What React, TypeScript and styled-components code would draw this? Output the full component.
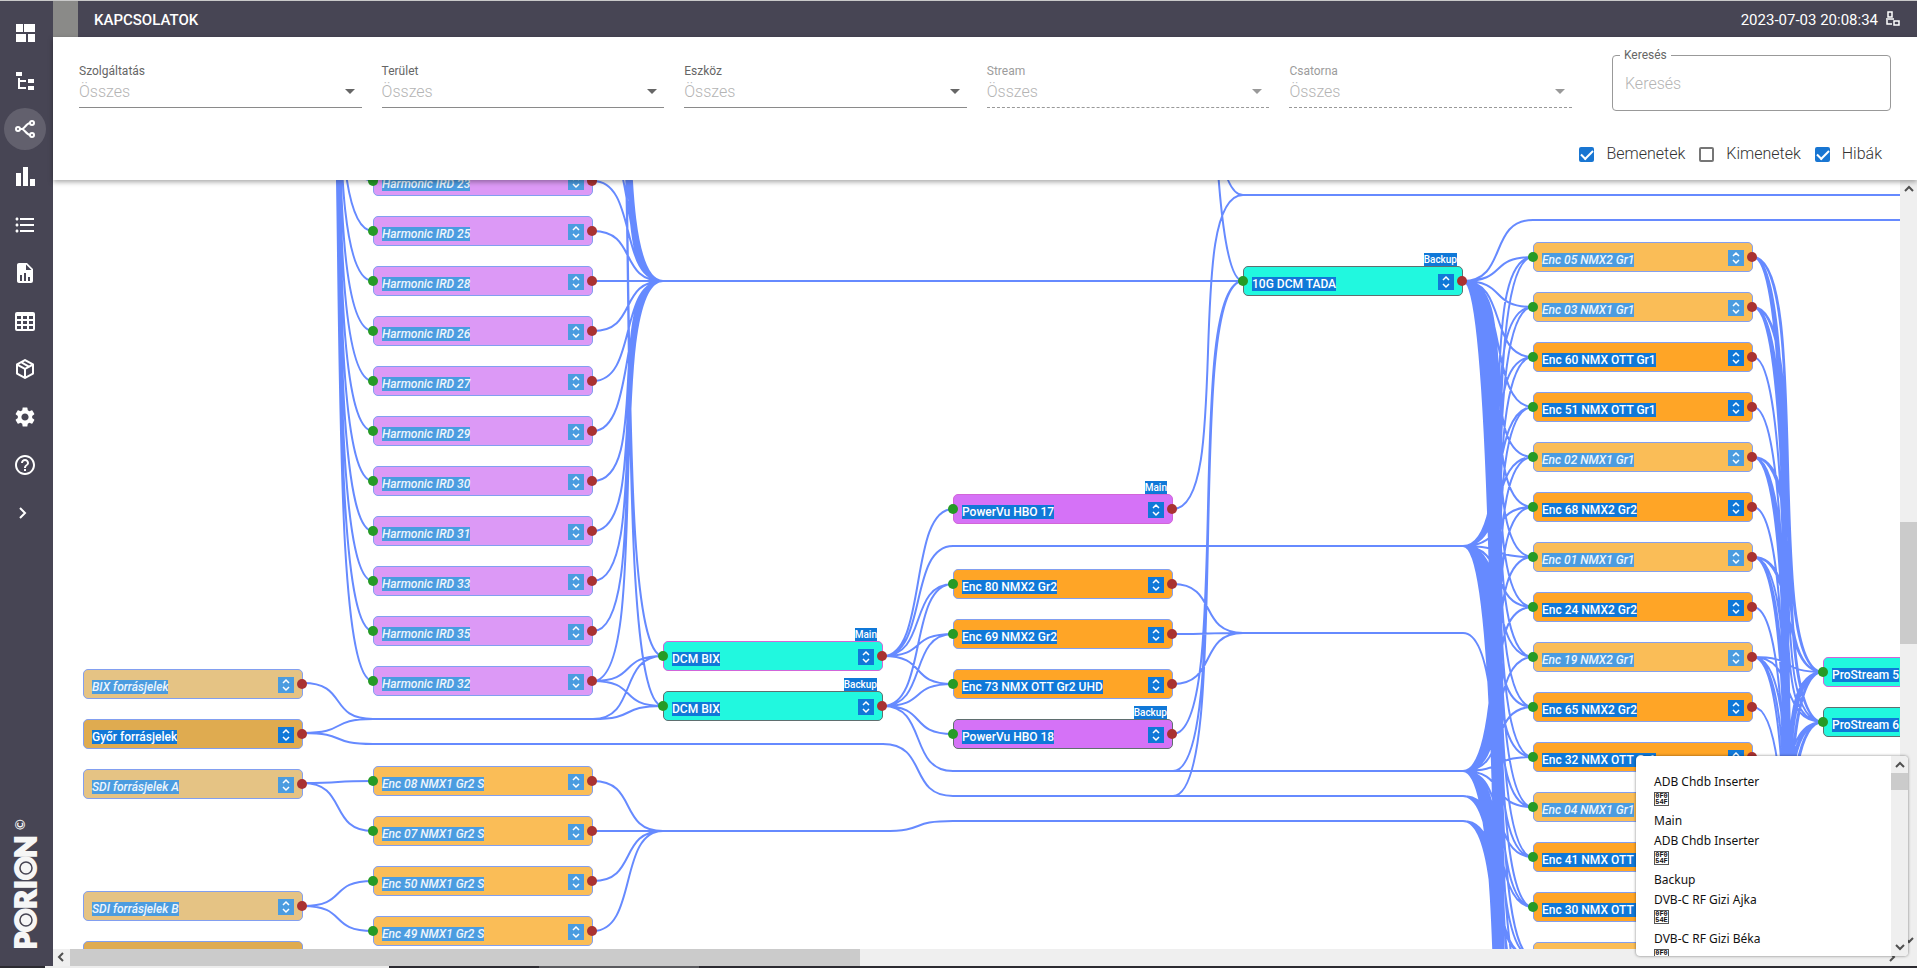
import React from "react";
import styled, { createGlobalStyle } from "styled-components";
import { MdSettings, MdHelpOutline, MdFormatListBulleted } from "react-icons/md";

const EDGE = "#668aff";

const Global = createGlobalStyle`
  * { box-sizing: border-box; }
  body { margin: 0; font-family: Roboto, "Liberation Sans", sans-serif; background: #fff; }
`;

const Page = styled.div`
  display: flex;
  flex-direction: column;
  height: 100vh;
  border-top: 1px solid #c9c9c9;
`;
const Body = styled.div`
  display: flex;
  flex: 1;
  min-height: 0;
`;
const Sidebar = styled.nav`
  width: 53px;
  flex: none;
  background: #474554;
  display: flex;
  flex-direction: column;
  justify-content: space-between;
  padding: 11px 7px 18px 4px;
`;
const Menu = styled.div`
  display: flex;
  flex-direction: column;
  gap: 6px;
`;
const MenuButton = styled.button<{ $active?: boolean }>`
  width: 42px;
  height: 42px;
  padding: 0;
  border: 0;
  border-radius: 50%;
  color: #fff;
  background: ${(p) => (p.$active ? "#62606d" : "transparent")};
  display: flex;
  align-items: center;
  justify-content: center;
`;
const Logo = styled.svg`
  display: block;
  width: 42px;
  height: 132px;
`;
const Main = styled.main`
  flex: 1;
  min-width: 0;
  display: flex;
  flex-direction: column;
`;
const TopBar = styled.header`
  height: 36px;
  flex: none;
  background: #474554;
  color: #fff;
  display: flex;
  align-items: center;
  padding-right: 16px;
`;
const Handle = styled.div`
  width: 25px;
  align-self: stretch;
  background: #8a8a88;
`;
const Title = styled.h1`
  margin: 0 auto 0 16px;
  padding-top: 2px;
  font-size: 15px;
  line-height: 20px;
  font-weight: 500;
`;
const Clock = styled.time`
  padding-top: 2px;
  font-size: 15px;
  line-height: 20px;
  font-weight: 400;
  margin-right: 7px;
`;
const Filters = styled.form`
  position: relative;
  z-index: 2;
  height: 143px;
  flex: none;
  padding: 19px 26px 0;
  background: #fff;
  box-shadow: 0 2px 5px rgba(0, 0, 0, 0.35);
`;
const FilterRow = styled.div`
  display: flex;
  gap: 20px;
`;
const Field = styled.label<{ $off?: boolean }>`
  flex: 1;
  display: flex;
  flex-direction: column;
  font-size: 12px;
  line-height: 14px;
  padding-top: 8px;
  color: ${(p) => (p.$off ? "#9c9c9c" : "#666")};
`;
const SelectBox = styled.span<{ $off?: boolean }>`
  position: relative;
  display: block;
  height: 30px;
  border-bottom: 1px ${(p) => (p.$off ? "dashed #999" : "solid #8a8a8a")};
  &::after {
    content: "";
    position: absolute;
    right: 7px;
    top: 11px;
    border: 5px solid transparent;
    border-top-color: ${(p) => (p.$off ? "#999" : "#666")};
    border-bottom: 0;
  }
`;
const Select = styled.select`
  width: 100%;
  height: 28px;
  padding: 0;
  border: 0;
  appearance: none;
  background: transparent;
  font: 300 16px/24px Roboto, sans-serif;
  color: #b4b4b4;
  opacity: 1;
`;
const SearchBox = styled.fieldset`
  width: 279px;
  height: 63px;
  margin: -8px 0 0 20px;
  padding: 0 8px;
  border: 1px solid #999;
  border-radius: 4px;
  legend {
    margin-left: -1px;
    padding: 0 4px;
    font-size: 12px;
    line-height: 14px;
    color: #666;
  }
  input {
    width: 100%;
    height: 42px;
    border: 0;
    padding: 0 4px;
    outline: 0;
    background: transparent;
    font: 300 16px/24px Roboto, sans-serif;
  }
  input::placeholder { color: #b4b4b4; opacity: 1; }
`;
const Checks = styled.div`
  display: flex;
  justify-content: flex-end;
  gap: 14px;
  padding: 33px 9px 0 0;
`;
const Check = styled.label`
  display: flex;
  align-items: center;
  gap: 12px;
  font-size: 16px;
  line-height: 20px;
  font-weight: 300;
  color: #333;
`;
const Tick = styled.input`
  appearance: none;
  width: 15px;
  height: 15px;
  margin: 0;
  border: 2px solid #767676;
  border-radius: 2px;
  display: grid;
  place-items: center;
  &:checked { background: #1976d2; border-color: #1976d2; }
  &:checked::after {
    content: "";
    width: 10px;
    height: 5px;
    border: solid #fff;
    border-width: 0 0 2px 2px;
    transform: translateY(-1px) rotate(-45deg);
  }
`;
const Stage = styled.section`
  position: relative;
  flex: 1;
  min-height: 0;
  display: grid;
  grid-template-columns: 1fr 17px;
  grid-template-rows: 1fr 17px;
`;
const Canvas = styled.div`
  position: relative;
  overflow: hidden;
  background: #fff;
`;
const Wires = styled.svg`
  position: absolute;
  left: 0;
  top: 0;
  width: 100%;
  height: 100%;
`;
const kinds: Record<string, { bg: string; dim: string }> = {
  ird: { bg: "#d572f7", dim: "#dc99f6" },
  enc: { bg: "#ffa526", dim: "#fabd57" },
  dcm: { bg: "#21f8df", dim: "#7dfbec" },
  src: { bg: "#dfab50", dim: "#e5c384" },
};
const NodeBox = styled.div<{ $kind: string; $dim?: boolean; $edge?: string }>`
  position: absolute;
  width: 220px;
  height: 30px;
  padding: 4px 8px 0 8px;
  border: 1px solid ${(p) => p.$edge || "#829ff0"};
  border-radius: 5px;
  background: ${(p) => (p.$dim ? kinds[p.$kind].dim : kinds[p.$kind].bg)};
  display: flex;
  justify-content: space-between;
  align-items: flex-start;
`;
const NodeName = styled.span<{ $dim?: boolean }>`
  margin-top: 6px;
  font-size: 12px;
  line-height: 14px;
  font-weight: 500;
  white-space: nowrap;
  color: ${(p) => (p.$dim ? "#edf5fc" : "#fff")};
  font-style: ${(p) => (p.$dim ? "italic" : "normal")};
  background: ${(p) => (p.$dim ? "#4b9ce0" : "#1078d8")};
`;
const Expand = styled.button<{ $dim?: boolean }>`
  width: 16px;
  height: 16px;
  margin-top: 3px;
  padding: 0;
  border: 0;
  color: #fff;
  display: flex;
  background: ${(p) => (p.$dim ? "#4b9ce0" : "#1078d8")};
`;
const Port = styled.i<{ $out?: boolean }>`
  position: absolute;
  top: 9px;
  ${(p) => (p.$out ? "right: -5px;" : "left: -6px;")}
  width: 10px;
  height: 10px;
  border-radius: 50%;
  background: ${(p) => (p.$out ? "#a93232" : "#269a26")};
`;
const Tag = styled.span`
  position: absolute;
  right: 5px;
  bottom: 29px;
  padding-top: 1px;
  font-size: 10px;
  line-height: 12px;
  font-weight: 500;
  color: #fff;
  background: #1078d8;
`;
const Bar = styled.div<{ $v?: boolean }>`
  display: flex;
  flex-direction: ${(p) => (p.$v ? "column" : "row")};
  background: #efefef;
  min-width: 0;
  min-height: 0;
`;
const Arrow = styled.svg`
  width: 17px;
  height: 17px;
  flex: none;
  fill: none;
  stroke: #505050;
  stroke-width: 2;
`;
const Space = styled.div<{ $n: number }>`
  flex: ${(p) => p.$n} 0 0;
`;
const Thumb = styled.div<{ $n: number }>`
  flex: ${(p) => p.$n} 0 0;
  background: #cbcbcb;
`;
const Corner = styled.div`
  background: #efefef;
`;
const Popup = styled.aside`
  position: absolute;
  right: 9px;
  bottom: 10px;
  z-index: 3;
  width: 272px;
  height: 200px;
  overflow: hidden;
  background: #fff;
  border-radius: 4px;
  box-shadow: 0 0 3px rgba(0, 0, 0, 0.5);
  display: flex;
`;
const DeviceList = styled.ul`
  flex: 1;
  margin: 0;
  padding: 16px 0 0 18px;
  list-style: none;
  font-family: "Noto Sans", "Open Sans", sans-serif;
  font-size: 12px;
  color: #111;
`;
const Device = styled.div`
  line-height: 19px;
`;
const Role = styled.div`
  line-height: 20px;
`;
const GlyphLine = styled.div`
  height: 20px;
  padding-top: 1px;
`;
const Glyph = styled.span`
  display: block;
  width: 15px;
  height: 14px;
  border: 1px solid #555;
  font-family: "Liberation Mono", monospace;
  font-size: 7px;
  line-height: 6px;
  font-weight: 700;
  text-align: center;
  white-space: pre;
`;
const TaskStrip = styled.footer`
  height: 2px;
  flex: none;
  display: flex;
  background: #2c2b31;
  padding-left: 45px;
`;
const TaskItem = styled.div<{ $w: number; $c: string }>`
  flex: none;
  width: ${(p) => p.$w}px;
  background: ${(p) => p.$c};
`;

type N = { x: number; y: number; k: string; t: string; dim?: boolean; tag?: string; noIn?: boolean };
const col = (x: number, k: string, y0: number, names: [string, boolean?, string?][], extra = {}): N[] =>
  names.map(([t, dim, tag], i) => ({ x, y: y0 + i * 50, k, t, dim, tag, ...extra }));

// Coordinates are those of the scrolled canvas.
const nodes: N[] = [
  ...col(30, "src", 489, [["BIX forrásjelek", true], ["Győr forrásjelek"], ["SDI forrásjelek A", true]], { noIn: true }),
  ...col(30, "src", 711, [["SDI forrásjelek B", true], ["SDI forrásjelek C"]], { noIn: true }),
  ...col(320, "ird", -14, ["23", "25", "28", "26", "27", "29", "30", "31", "33", "35", "32"].map((n) => ["Harmonic IRD " + n, true] as [string, boolean])),
  ...col(320, "enc", 586, ["08", "07", "50", "49"].map((n) => [`Enc ${n} NMX1 Gr2 S`, true] as [string, boolean])),
  ...col(610, "dcm", 461, [["DCM BIX", false, "Main"], ["DCM BIX", false, "Backup"]]),
  ...col(900, "ird", 314, [["PowerVu HBO 17", false, "Main"]]),
  ...col(900, "enc", 389, [["Enc 80 NMX2 Gr2"], ["Enc 69 NMX2 Gr2"], ["Enc 73 NMX OTT Gr2 UHD"]]),
  ...col(900, "ird", 539, [["PowerVu HBO 18", false, "Backup"]]),
  ...col(1190, "dcm", 86, [["10G DCM TADA", false, "Backup"]]),
  ...col(1480, "enc", 62, [
    ["Enc 05 NMX2 Gr1", true], ["Enc 03 NMX1 Gr1", true], ["Enc 60 NMX OTT Gr1"], ["Enc 51 NMX OTT Gr1"],
    ["Enc 02 NMX1 Gr1", true], ["Enc 68 NMX2 Gr2"], ["Enc 01 NMX1 Gr1", true], ["Enc 24 NMX2 Gr2"],
    ["Enc 19 NMX2 Gr1", true], ["Enc 65 NMX2 Gr2"], ["Enc 32 NMX OTT Gr1"], ["Enc 04 NMX1 Gr1", true],
    ["Enc 41 NMX OTT Gr1"], ["Enc 30 NMX OTT Gr1"], ["Enc 06 NMX1 Gr1", true],
  ]),
  ...col(1770, "dcm", 477, [["ProStream 5", false, "Main"], ["ProStream 6", false, "Backup"]]),
];

const BEND = 60;
const link = (c: number, y1: number, y2: number) => {
  const x = 250 + c * 290;
  const bend = Math.abs(y2 - y1) < 160 ? 45 : BEND;
  return `M${x} ${y1}C${x + bend} ${y1} ${x + 70 - bend} ${y2} ${x + 70} ${y2}`;
};
const line = (x1: number, x2: number, y: number) => `M${x1} ${y}H${x2}`;
const fan = (c: number, froms: number[], tos: number[]) => froms.flatMap((a) => tos.map((b) => link(c, a, b)));
const range = (a: number, n: number, step = 50) => Array.from({ length: n }, (_, i) => a + i * step);

const wires = [
  ...fan(0, [503, 553], [539]), link(0, 553, 564), ...fan(0, [603], [601, 651]), ...fan(0, [726], [701, 751]),
  ...fan(0, [-352], range(1, 11)),
  line(320, 540, 539), line(320, 830, 564),
  ...fan(1, range(-299, 17), [101]), ...fan(1, [501, 539, -299], [476, 526]),
  ...fan(1, range(601, 4), [651]), line(610, 830, 651), line(610, 1190, 101),
  ...fan(2, [476], [329, 366, 404, 454, 504]), ...fan(2, [526], [404, 454, 504, 554, 591]),
  link(2, 564, 616), link(2, 651, 641),
  line(900, 1410, 366), line(900, 1410, 591), line(900, 1410, 616), line(900, 1410, 641),
  ...fan(3, [404, 454, 504], [453]), line(1190, 1410, 453),
  ...fan(3, [329, -499], [15]), ...fan(3, [554, 591, 616, -899], [101]), line(1190, 1847, 15),
  link(4, 101, 40), line(1480, 1847, 40),
  ...fan(4, [101], [...range(77, 18), ...range(977, 50, 25)]),
  ...fan(4, [366], [...range(77, 18), ...range(977, 24, 25)]),
  ...fan(4, [591], [...range(77, 18), ...range(977, 18, 25)]),
  link(4, 453, 877), ...fan(4, [616], range(777, 6)), ...fan(4, [641], range(827, 6)),
  ...fan(5, [77, 127, 277, 377, 477, 627, 777, 877], [492, 542]),
  ...fan(5, [77, 127, 277, 377, 477], [811, 961, 1111]),
  ...fan(5, [177, 227, 327, 427, 527, 577], [1061]),
  ...fan(5, [677, 727, 927], [492, 542]),
].join("");

const Mdi = ({ d }: { d: string }) => (
  <svg width="24" height="24" viewBox="0 0 24 24" fill="currentColor"><path d={d} /></svg>
);

const menu: [string, React.ReactNode][] = [
  ["Irányítópult", <Mdi d="M3 3h7v8H3zM11 3h11v8H11zM3 13h10v8H3zM15 13h7v8h-7z" />],
  ["Fa", <Mdi d="M3,3H9V7H3V3M15,10H21V14H15V10M15,17H21V21H15V17M13,13H7V18H13V20H7L5,20V9H7V11H13V13Z" />],
  ["Kapcsolatok", (
    <svg width="24" height="24" viewBox="0 0 24 24" fill="none" stroke="currentColor" strokeWidth="2">
      <circle cx="5" cy="12" r="2" /><circle cx="19" cy="6" r="2" /><circle cx="19" cy="18" r="2" />
      <path d="M7 12h2c2 0 5-6 8-6M9 12c2 0 5 6 8 6" />
    </svg>
  )],
  ["Grafikonok", <Mdi d="M3 8h5v13H3zM10 2h5v19h-5zM17 14h5v7h-5z" />],
  ["Lista", <MdFormatListBulleted size={24} />],
  ["Riport", <Mdi d="M13,9H18.5L13,3.5V9M6,2H14L20,8V20A2,2 0 0,1 18,22H6C4.89,22 4,21.1 4,20V4C4,2.89 4.89,2 6,2M7,20H9V14H7V20M11,20H13V12H11V20M15,20H17V16H15V20Z" />],
  ["Táblázat", <Mdi d="M4,3H20A2,2 0 0,1 22,5V20A2,2 0 0,1 20,22H4A2,2 0 0,1 2,20V5A2,2 0 0,1 4,3M4,7V10H8V7H4M10,7V10H14V7H10M20,10V7H16V10H20M4,12V15H8V12H4M4,20H8V17H4V20M10,12V15H14V12H10M10,20H14V17H10V20M20,20V17H16V20H20M20,12H16V15H20V12Z" />],
  ["Csomagok", <Mdi d="M21,16.5C21,16.88 20.79,17.21 20.47,17.38L12.57,21.82C12.41,21.94 12.21,22 12,22C11.79,22 11.59,21.94 11.43,21.82L3.53,17.38C3.21,17.21 3,16.88 3,16.5V7.5C3,7.12 3.21,6.79 3.53,6.62L11.43,2.18C11.59,2.06 11.79,2 12,2C12.21,2 12.41,2.06 12.57,2.18L20.47,6.62C20.79,6.79 21,7.12 21,7.5V16.5M12,4.15L10.11,5.22L16,8.61L17.96,7.5L12,4.15M6.04,7.5L12,10.85L13.96,9.75L8.08,6.35L6.04,7.5M5,15.91L11,19.29V12.58L5,9.21V15.91M19,15.91V9.21L13,12.58V19.29L19,15.91Z" />],
  ["Beállítások", <MdSettings size={24} />],
  ["Súgó", <MdHelpOutline size={24} />],
  ["Kinyitás", (
    <svg width="24" height="24" viewBox="0 0 24 24" fill="none" stroke="currentColor" strokeWidth="2">
      <path d="M7 7l5 5-5 5" />
    </svg>
  )],
];

const chevrons = { up: "M5 11l4-4 4 4", down: "M5 6l4 4 4-4", left: "M10 4l-4 4 4 4", right: "M7 4l4 4-4 4" };
const ScrollArrow = ({ dir }: { dir: keyof typeof chevrons }) => (
  <Arrow viewBox="0 0 17 17"><path d={chevrons[dir]} /></Arrow>
);

const GraphNode = ({ n }: { n: N }) => (
  <NodeBox
    $kind={n.k}
    $dim={n.dim}
    $edge={n.tag === "Main" ? "#d265d8" : n.tag === "Backup" ? "#5f6f6f" : undefined}
    style={{ left: n.x, top: n.y }}
  >
    {n.tag && <Tag>{n.tag}</Tag>}
    {!n.noIn && <Port />}
    <NodeName $dim={n.dim}>{n.t}</NodeName>
    <Expand type="button" aria-label={"Kibontás: " + n.t} $dim={n.dim}>
      <svg width="16" height="16" viewBox="0 0 16 16" fill="none" stroke="currentColor" strokeWidth="1.500">
        <path d="M5 6l3-3 3 3M5 10l3 3 3-3" />
      </svg>
    </Expand>
    <Port $out />
  </NodeBox>
);

const devices: [string, string, string?][] = [
  ["ADB Chdb Inserter", "0F0\n54F", "Main"],
  ["ADB Chdb Inserter", "0F0\n54F", "Backup"],
  ["DVB-C RF Gizi Ajka", "0F0\n54E"],
  ["DVB-C RF Gizi Béka", "0F0\n54E"],
];

export default function App() {
  return (
    <Page>
      <Global />
      <Body>
        <Sidebar>
          <Menu>
            {menu.map(([name, icon]) => (
              <MenuButton key={name} type="button" aria-label={name} $active={name === "Kapcsolatok"}>{icon}</MenuButton>
            ))}
          </Menu>
          <Logo viewBox="0 0 42 132">
            <g transform="rotate(-90)" fill="#f6f6f6" fontFamily="Lato, sans-serif">
              <text x="-134 -116 -93 -73 -64 -42" y="32" fontSize="29" fontWeight="900" stroke="#f6f6f6" strokeWidth="2">PORION</text>
              <circle cx="-104" cy="22" r="6" stroke="#474554" strokeWidth="1.500" />
              <circle cx="-52" cy="22" r="6" stroke="#474554" strokeWidth="1.500" />
              <text x="-14" y="21" fontSize="13" fontWeight="700">©</text>
            </g>
          </Logo>
        </Sidebar>
        <Main>
          <TopBar>
            <Handle />
            <Title>KAPCSOLATOK</Title>
            <Clock>2023-07-03 20:08:34</Clock>
            <svg width="16" height="16" viewBox="0 0 16 16" fill="none" stroke="#fff" strokeWidth="1.500">
              <path d="M3 1h4v5H3zM1 8h8M9 10h5v4H9zM2 9v4h5" />
            </svg>
          </TopBar>
          <Filters>
            <FilterRow>
              {["Szolgáltatás", "Terület", "Eszköz", "Stream", "Csatorna"].map((f, i) => (
                <Field key={f} $off={i > 2}>
                  {f}
                  <SelectBox $off={i > 2}>
                    <Select disabled={i > 2}><option>Összes</option></Select>
                  </SelectBox>
                </Field>
              ))}
              <SearchBox>
                <legend>Keresés</legend>
                <input aria-label="Keresés" placeholder="Keresés" />
              </SearchBox>
            </FilterRow>
            <Checks>
              <Check><Tick type="checkbox" defaultChecked />Bemenetek</Check>
              <Check><Tick type="checkbox" />Kimenetek</Check>
              <Check><Tick type="checkbox" defaultChecked />Hibák</Check>
            </Checks>
          </Filters>
          <Stage>
            <Canvas>
              <Wires><path d={wires} fill="none" stroke={EDGE} strokeWidth="2" /></Wires>
              {nodes.map((n) => <GraphNode key={n.x + "-" + n.y} n={n} />)}
            </Canvas>
            <Bar $v>
              <ScrollArrow dir="up" /><Space $n={325} /><Thumb $n={121} /><Space $n={288} /><ScrollArrow dir="down" />
            </Bar>
            <Bar>
              <ScrollArrow dir="left" /><Thumb $n={790} /><Space $n={1023} /><ScrollArrow dir="right" />
            </Bar>
            <Corner />
            <Popup>
              <DeviceList>
                {devices.map(([name, code, role], i) => (
                  <li key={i}>
                    <Device>{name}</Device>
                    <GlyphLine><Glyph>{code}</Glyph></GlyphLine>
                    {role && <Role>{role}</Role>}
                  </li>
                ))}
              </DeviceList>
              <Bar $v>
                <ScrollArrow dir="up" /><Thumb $n={17} /><Space $n={149} /><ScrollArrow dir="down" />
              </Bar>
            </Popup>
          </Stage>
        </Main>
      </Body>
      <TaskStrip>
        <TaskItem $w={344} $c="#ededed" />
        <TaskItem $w={150} $c="#2c2b31" />
        <TaskItem $w={160} $c="#5a5a5e" />
      </TaskStrip>
    </Page>
  );
}
